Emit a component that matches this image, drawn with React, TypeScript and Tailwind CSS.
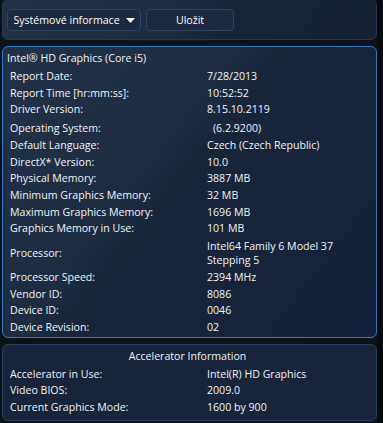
import React from 'react';

const rows: [string, React.ReactNode, string?][] = [
    ['Report Date:', '7/28/2013'],
    ['Report Time [hr:mm:ss]:', '10:52:52'],
    ['Driver Version:', '8.15.10.2119'],
    ['Operating System:', <span className="pl-[6px]">(6.2.9200)</span>, 'mt-[2px]'],
    ['Default Language:', 'Czech (Czech Republic)'],
    ['DirectX* Version:', '10.0'],
    ['Physical Memory:', '3887 MB'],
    ['Minimum Graphics Memory:', '32 MB'],
    ['Maximum Graphics Memory:', '1696 MB'],
    ['Graphics Memory in Use:', '101 MB'],
    [
        'Processor:',
        <span className="block leading-[14px] py-[2px]">
            Intel64 Family 6 Model 37
            <br />
            Stepping 5
        </span>,
    ],
    ['Processor Speed:', '2394 MHz'],
    ['Vendor ID:', '8086'],
    ['Device ID:', '0046'],
    ['Device Revision:', '02'],
];

const accel: [string, string][] = [
    ['Accelerator in Use:', 'Intel(R) HD Graphics'],
    ['Video BIOS:', '2009.0'],
    ['Current Graphics Mode:', '1600 by 900'],
];

function Row({ label, value, extra }: { label: string; value: React.ReactNode; extra?: string }) {
    return (
        <div className={'grid grid-cols-[199px_1fr] items-center min-h-[16.7px] ' + (extra ?? '')}>
            <span className="pl-[2px]">{label}</span>
            <span>{value}</span>
        </div>
    );
}

export default function App() {
    return (
        <div
            className="w-[383px] h-[423px] overflow-hidden relative bg-[#0d1219] text-[#f1f4f8] text-[10.6px] leading-[16.7px]"
            style={{ fontFamily: '"Open Sans", "Noto Sans", sans-serif' }}>
            {/* right dark strip */}
            <div className="absolute top-0 right-0 w-[6px] h-full bg-[#070a0e]" />
            <div className="flex flex-col gap-[6px] pl-[2px] pr-[6px] pt-0">
                {/* toolbar */}
                <div className="h-[41px] -mt-[1px] rounded-md border border-[#26374f] bg-[linear-gradient(122deg,#223145_0%,#1e2c40_45%,#182538_60%,#152133_100%)] flex items-center gap-[5px] pl-[4px] pt-[1px]">
                    <button className="h-[22px] w-[134px] rounded-[4px] border border-[#2d4463] bg-[#1b2a3f] flex items-center justify-center gap-[6px] text-[10.6px] text-white">
                        Systémové informace
                        <svg width="9" height="5" viewBox="0 0 9 5">
                            <path d="M0 0h9L4.5 5z" fill="#f2f4f7" />
                        </svg>
                    </button>
                    <button className="h-[22px] w-[88px] rounded-[4px] border border-[#2d4463] bg-[#1b2a3f] text-[10.6px] text-white">
                        Uložit
                    </button>
                </div>

                {/* main info */}
                <div className="h-[292px] rounded-md border border-[#3277c4] bg-[linear-gradient(128deg,#213147_0%,#1d2c41_40%,#182539_48%,#15213a_100%)] px-[5px] pt-[3px]">
                    <div className="leading-[17px] -ml-[1px] mb-[1px]">Intel® HD Graphics (Core i5)</div>
                    {rows.map(([l, v, e]) => (
                        <Row key={l} label={l} value={v} extra={e} />
                    ))}
                </div>

                {/* accelerator */}
                <div className="h-[77px] rounded-md border border-[#2a3f5e] bg-[#17243a] px-[5px] pt-[2px]">
                    <div className="text-center pt-[1px] pb-[1px] pr-[4px]">Accelerator Information</div>
                    {accel.map(([l, v]) => (
                        <Row key={l} label={l} value={v} />
                    ))}
                </div>
            </div>
        </div>
    );
}
